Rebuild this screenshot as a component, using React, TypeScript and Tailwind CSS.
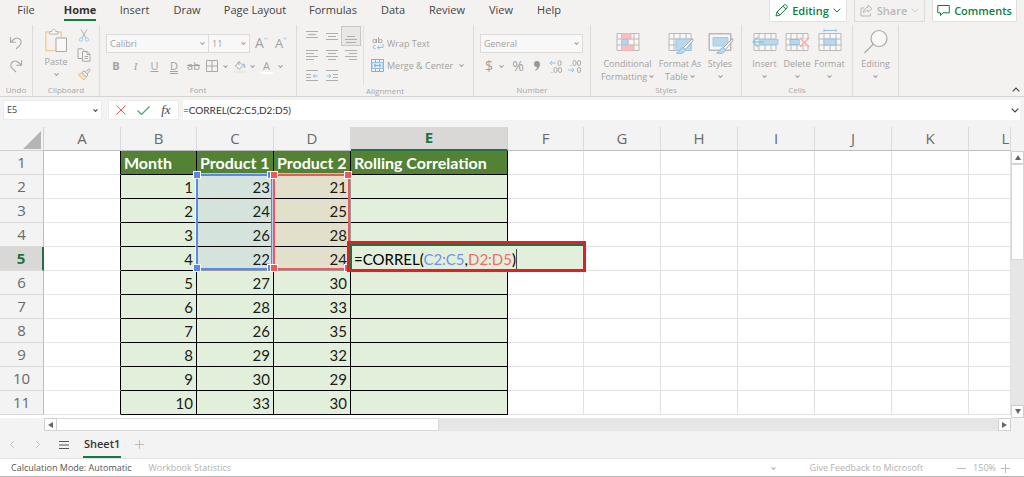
import React from "react";

const ui = "font-['Open_Sans','Noto_Sans',sans-serif]";
const gridFont = "font-['Lato','Open_Sans',sans-serif]";

function Chevron({ className = "w-[5px] h-[3px]", width = 1.8 }: { className?: string; width?: number }) {
  return (
    <svg viewBox="0 0 8 5" className={className} fill="none" stroke="currentColor" strokeWidth={width} aria-hidden="true">
      <path d="M0.7 0.7 4 4 7.3 0.7" />
    </svg>
  );
}

function Group({ label, className, children }: { label: string; className: string; children: React.ReactNode }) {
  return (
    <section aria-label={label || "Editing"} className={`flex h-[71px] shrink-0 flex-col border-r border-[#dddbd9] ${className}`}>
      <div className="flex h-[60px]">{children}</div>
      <div className="text-center text-[8px] leading-[12px] text-[#a9a7a5]">{label}</div>
    </section>
  );
}

function UndoIcon({ flip = false }: { flip?: boolean }) {
  return (
    <svg viewBox="0 0 14 14" className="h-[14px] w-[14px]" fill="none" stroke="#aaa8a6" strokeWidth="1.1" aria-hidden="true">
      <g transform={flip ? "translate(14 0) scale(-1 1)" : undefined}>
        <path d="M1.5 1.2v5h5.2M1.7 6 5.6 2.8C8.2.9 12 2.7 12.2 6c0 1.5-.5 2.3-1.5 3.3L7 13" />
      </g>
    </svg>
  );
}

function PasteIcon() {
  return (
    <svg viewBox="0 0 24 26" className="h-[26px] w-[24px]" fill="none" aria-hidden="true">
      <path d="M7 4H1.8v18.5H12M13 4h4.200v5" stroke="#f6cd97" strokeWidth="1.5" />
      <path d="M5.500 6V3.500h2.300C8 .6 11.500.6 11.700 3.500H14V6z" fill="#f8f8f8" stroke="#b8b6b4" />
      <path d="M12 10h10.500v13.500H12z" fill="#f8f8f8" stroke="#aaa8a6" />
    </svg>
  );
}

function CutIcon() {
  return (
    <svg viewBox="0 0 12 13" className="h-[13px] w-[12px]" fill="none" aria-hidden="true">
      <path d="M3 .5 8 9M9 .5 4 9" stroke="#b3b1af" />
      <circle cx="3" cy="10.5" r="1.7" stroke="#a3cde9" />
      <circle cx="9" cy="10.5" r="1.7" stroke="#a3cde9" />
    </svg>
  );
}

function CopyIcon() {
  return (
    <svg viewBox="0 0 14 14" className="h-[14px] w-[14px]" fill="none" stroke="#aaa8a6" aria-hidden="true">
      <path d="M5 10.500H1V.8h4.500L7.500 3" />
      <path d="M5.500 3.500h4.700L13 6.300v6.900H5.500zM10 3.500v3h3M7.500 8.500H11M7.500 10.500H11" fill="#f5f5f5" />
    </svg>
  );
}

function PainterIcon() {
  return (
    <svg viewBox="0 0 14 13" className="h-[13px] w-[14px]" fill="none" aria-hidden="true">
      <path d="M1 6.500 5.500 5l4 4L7 12z" fill="#fae1c0" stroke="#f3be84" />
      <path d="m5 4.500 2-1.700 4 4.200-1.800 2zM8.300 4 12 .8l1.200 1.300L10 5.800" fill="#f5f5f5" stroke="#aaa8a6" />
    </svg>
  );
}

function Bars({ kind }: { kind: string }) {
  const sets: Record<string, number[][]> = {
    top: [[2, 0, 12], [5, 2, 10], [8, 0, 12]],
    middle: [[4, 0, 12], [7, 2, 10], [10, 0, 12]],
    bottom: [[7, 2, 10], [10, 0, 12], [13, 1, 11]],
    left: [[1, 0, 12], [4, 0, 8], [7, 0, 12], [10, 0, 8]],
    center: [[1, 0, 12], [4, 2, 10], [7, 0, 12], [10, 2, 10]],
    right: [[1, 0, 12], [4, 4, 12], [7, 0, 12], [10, 4, 12]],
    outdent: [[1, 0, 12], [5, 0, 5], [8, 0, 5], [11, 0, 12]],
    indent: [[1, 0, 12], [5, 7, 12], [8, 7, 12], [11, 0, 12]],
  };
  return (
    <svg viewBox="0 0 12 14" className="h-[14px] w-[12px]" aria-hidden="true">
      {sets[kind].map(([y, a, b]) => (
        <path key={y} d={`M${a} ${y + 0.5}H${b}`} stroke="#b0aeac" />
      ))}
      {kind === "outdent" && <path d="M12 7H7.500M9.200 5 7.300 7l1.900 2" stroke="#8fc3e6" fill="none" />}
      {kind === "indent" && <path d="M.5 7H5M3 5l2 2-2 2" stroke="#8fc3e6" fill="none" />}
    </svg>
  );
}

function MiniTable({ kind }: { kind: string }) {
  return (
    <svg viewBox="0 0 28 28" className="h-[28px] w-[28px]" fill="none" aria-hidden="true">
      <path d="M3 5.500h22v17H3zM3 11h22M3 17h22M8 5.500v17M14 5.500v17M20 5.500v17" fill="#f7f7f7" stroke="#bbb9b7" />
      {kind === "conditional" && (
        <>
          <path d="M7.500 5.500H17V11H7.500zM7.500 17H19v5.500H7.500z" fill="#f7bfbf" stroke="#f5b3b3" />
          <path d="M7.500 11.500H14v5H7.500z" fill="#b4d5ee" stroke="#a5c9e3" />
        </>
      )}
      {kind === "table" && <path d="M10 11h15v11.500H10z" fill="#b9d8ef" stroke="#9bc4e1" />}
      {kind === "styles" && <path d="M3.500 6h21v16h-21z" fill="#f7f7f7" stroke="#bbb9b7" />}
      {kind === "styles" && <path d="M7 9.500h15V18H7z" fill="#b9d8ef" stroke="#a3cae5" />}
      {(kind === "table" || kind === "styles") && (
        <>
          <path d="m26.500 10.500-9 9 2 2 7.500-9z" fill="#f8f8f8" stroke="#aaa8a6" />
          <path d="M17 19.500c-3 0-2.500 4.500-6.500 5.500 4 1.500 8.500 0 9-3.500z" fill="#b9d8ef" stroke="#91bddb" />
        </>
      )}
      {kind === "insert" && (
        <>
          <path d="M9 11.500h18v5H9z" fill="#b9d8ef" stroke="#a3cae5" />
          <path d="M13 14H2.500M7 9l-5 5 5 5" stroke="#8fc3e6" strokeWidth="1.3" />
        </>
      )}
      {kind === "delete" && (
        <>
          <path d="M7 11.500h9l2 2.500-2 2.500H7z" fill="#b9d8ef" stroke="#99bedb" />
          <path d="M17 11h9v6h-9z" fill="#f3f2f1" />
          <path d="m17 10 9 9m0-9-9 9" stroke="#f1a7a7" strokeWidth="1.3" />
        </>
      )}
      {kind === "format" && (
        <>
          <path d="M8 11h12v6H8z" fill="#b9d8ef" stroke="#99bedb" />
          <path d="M8 2.500h12M8 .8v3.400M20 .8v3.400" stroke="#8fc3e6" />
        </>
      )}
    </svg>
  );
}

function BigButton({ icon, lines, className }: { icon: string; lines: string[]; className: string }) {
  const two = lines.length > 1;
  return (
    <button className={`flex shrink-0 flex-col items-center text-[9px] leading-[13px] text-[#a3a19f] ${className}`}>
      <span className="mt-[2px] mb-[1px] flex h-[29px] items-center">
        {icon === "search" ? (
          <svg viewBox="0 0 28 28" className="h-[28px] w-[28px]" fill="none" stroke="#aaa8a6" strokeWidth="1.2" aria-hidden="true">
            <circle cx="17" cy="10.5" r="8" fill="#f7f7f7" />
            <path d="M11.300 16.200 2.500 25" />
          </svg>
        ) : (
          <MiniTable kind={icon} />
        )}
      </span>
      <span className="whitespace-nowrap">{lines[0]}</span>
      <span className="flex h-[13px] items-center gap-[2px] whitespace-nowrap">
        {two && lines[1]}
        <Chevron />
      </span>
    </button>
  );
}

const fontButton = "flex h-[16px] items-center justify-center text-[11px] leading-[16px]";

function Ribbon() {
  return (
    <div className="flex h-[73px] overflow-hidden border-b border-[#d6d4d2] pt-[1px] shadow-[0_1px_2px_#d8d8d8]">
      <Group label="Undo" className="w-[33px]">
        <div className="flex w-full flex-col items-center gap-[9px] pt-[11px]">
          <button aria-label="Undo"><UndoIcon /></button>
          <button aria-label="Redo"><UndoIcon flip /></button>
        </div>
      </Group>
      <Group label="Clipboard" className="w-[67px]">
        <button className="ml-[2px] flex w-[42px] flex-col items-center pt-[3px] text-[9px] leading-[15px] text-[#a3a19f]">
          <PasteIcon />
          Paste
          <Chevron className="mt-[4px] h-[3px] w-[5px]" />
        </button>
        <div className="flex w-[14px] flex-col items-center gap-[6px] pt-[4px]">
          <button aria-label="Cut"><CutIcon /></button>
          <button aria-label="Copy"><CopyIcon /></button>
          <button aria-label="Format painter"><PainterIcon /></button>
        </div>
      </Group>
      <Group label="Font" className="w-[197px]">
        <div className="flex w-full flex-col gap-[5px] pt-[9px] pl-[6px] text-[#a3a19f]">
          <div className="flex h-[19px]">
            <button aria-label="Font family" className="flex w-[103px] items-center justify-between border border-[#dddbd9] bg-[#f8f8f8] px-[3px] text-[9px]">
              Calibri <Chevron />
            </button>
            <button aria-label="Font size" className="flex w-[41px] items-center justify-between border border-l-0 border-[#dddbd9] bg-[#f8f8f8] px-[3px] text-[9px]">
              11 <Chevron />
            </button>
            <button aria-label="Grow font" className="ml-[5px] flex w-[14px] text-[14px] leading-[18px]">
              A<Chevron className="mt-[3px] h-[3px] w-[4px] shrink-0 rotate-180 text-[#8fc3e6]" />
            </button>
            <button aria-label="Shrink font" className="ml-[6px] flex w-[14px] text-[13px] leading-[19px]">
              A<Chevron className="mt-[3px] h-[3px] w-[4px] shrink-0 text-[#8fc3e6]" />
            </button>
          </div>
          <div className="flex items-center">
            <button className={`${fontButton} w-[20px] font-bold`}>B</button>
            <button className={`${fontButton} w-[19px] font-['Liberation_Serif',serif] italic`}>I</button>
            <button className={`${fontButton} w-[19px] underline`}>U</button>
            <button className={`${fontButton} w-[20px] underline decoration-double`}>D</button>
            <button className={`${fontButton} w-[19px] line-through`}>ab</button>
            <button aria-label="Borders" className={`${fontButton} w-[28px] gap-[5px]`}>
              <svg viewBox="0 0 12 12" className="h-[12px] w-[12px]" fill="none" stroke="#aaa8a6" aria-hidden="true">
                <path d="M.5.5h11v11H.5zM6 .5v11M.5 6h11" />
              </svg>
              <Chevron />
            </button>
            <button aria-label="Fill colour" className={`${fontButton} w-[27px] gap-[4px]`}>
              <svg viewBox="0 0 12 13" className="h-[13px] w-[12px]" fill="none" aria-hidden="true">
                <path d="M5 1.500 9 5.500 5 9.500 1.500 6zM5 1.500V5" stroke="#aaa8a6" />
                <path d="M9 4c1.800.3 1.800 2 1.500 4" stroke="#8fc3e6" strokeWidth="1.5" />
                <path d="M0 12h12" stroke="#e4ecdf" strokeWidth="2" />
              </svg>
              <Chevron />
            </button>
            <button aria-label="Font colour" className={`${fontButton} w-[27px] gap-[5px]`}>
              <span className="w-[12px] border-b-2 border-white leading-[13px]">A</span>
              <Chevron />
            </button>
          </div>
        </div>
      </Group>
      <Group label="Alignment" className="w-[177px]">
        <div className="grid w-[67px] grid-cols-[20px_19px_20px] grid-rows-[20px_20px_19px] justify-end border-r border-[#e1dfdd] pt-[1px] pr-[2px]">
          {["top", "middle", "bottom", "left", "center", "right", "outdent", "indent"].map((k) => (
            <button key={k} aria-label={k} className={`flex items-center justify-center ${k === "bottom" ? "border border-[#c8c6c4] bg-[#e9e7e6]" : ""}`}>
              <Bars kind={k} />
            </button>
          ))}
        </div>
        <div className="flex flex-col items-start gap-[7px] pt-[11px] pl-[7px] text-[9px] leading-[15px] text-[#a3a19f]">
          <button className="flex items-center gap-[3px] whitespace-nowrap">
            <svg viewBox="0 0 13 13" className="h-[13px] w-[13px]" fill="none" aria-hidden="true">
              <circle cx="3.5" cy="4" r="1.7" stroke="#aaa8a6" />
              <path d="M5.500 2v4M7.500 0v6M4.500 8.500c-3-1-3 4 0 3" stroke="#aaa8a6" />
              <circle cx="9.5" cy="4" r="1.7" stroke="#aaa8a6" />
              <path d="M12 7v3.500H6.500M8.500 8.500l-2 2 2 2" stroke="#8fc3e6" />
            </svg>
            Wrap Text
          </button>
          <button className="flex items-center gap-[3px] whitespace-nowrap">
            <svg viewBox="0 0 13 13" className="h-[13px] w-[13px]" fill="none" aria-hidden="true">
              <path d="M.5.5h12v12H.5zM4.500.5v12M8.500.5v12" stroke="#aaa8a6" />
              <path d="M1 3.500h11v6H1z" fill="#dcebf6" stroke="#8fc3e6" />
              <path d="M3 6.500h7M5 4.800 3 6.500l2 1.700M8 4.800l2 1.700-2 1.700" stroke="#7db6dc" />
            </svg>
            Merge &amp; Center
            <Chevron className="ml-[3px] h-[3px] w-[5px]" />
          </button>
        </div>
      </Group>
      <Group label="Number" className="w-[117px]">
        <div className="flex w-full flex-col gap-[5px] pt-[9px] pl-[6px] text-[#a3a19f]">
          <button aria-label="Number format" className="flex h-[19px] w-[103px] items-center justify-between border border-[#dddbd9] bg-[#f8f8f8] px-[3px] text-[9px]">
            General <Chevron />
          </button>
          <div className="flex h-[16px] items-center pl-[5px] leading-[16px]">
            <button aria-label="Currency" className="flex w-[24px] items-center gap-[6px] text-[14px]">$<Chevron /></button>
            <button className="w-[18px] text-center text-[14px]">%</button>
            <button aria-label="Comma style" className="flex w-[19px] justify-center">
              <svg viewBox="0 0 6 10" className="h-[10px] w-[6px]" fill="#9a9896" aria-hidden="true">
                <path d="M3 0c3 0 3.500 3 2.500 5.500S2.500 9.500.5 10c1.500-1.500 2.500-2.500 2.500-4A2.800 2.800 0 0 1 3 0" />
              </svg>
            </button>
            {["dec", "inc"].map((k) => (
              <button key={k} aria-label={k === "dec" ? "Increase decimal" : "Decrease decimal"} className="flex w-[19px] justify-center">
                <svg viewBox="0 0 13 13" className="h-[13px] w-[13px]" fill="none" stroke="#b0aeac" aria-hidden="true">
                  {k === "dec" ? (
                    <>
                      <path d="M6.500 3H.8M3 1 1 3l2 2" stroke="#8fc3e6" />
                      <rect x="9" y=".5" width="3" height="5" rx="1.5" />
                      <path d="M3 12v1" />
                      <rect x="5" y="7.5" width="3" height="5" rx="1.5" />
                      <rect x="9.5" y="7.5" width="3" height="5" rx="1.5" />
                    </>
                  ) : (
                    <>
                      <rect x="5" y=".5" width="3" height="5" rx="1.5" />
                      <rect x="9.5" y=".5" width="3" height="5" rx="1.5" />
                      <path d="M3 5v1" />
                      <path d="M0 10h6M4 8l2 2-2 2" stroke="#8fc3e6" />
                      <rect x="9.5" y="7.5" width="3" height="5" rx="1.5" />
                    </>
                  )}
                </svg>
              </button>
            ))}
          </div>
        </div>
      </Group>
      <Group label="Styles" className="w-[151px]">
        <BigButton icon="conditional" lines={["Conditional", "Formatting"]} className="ml-[8px] w-[57px]" />
        <BigButton icon="table" lines={["Format As", "Table"]} className="w-[48px]" />
        <BigButton icon="styles" lines={["Styles"]} className="w-[32px]" />
      </Group>
      <Group label="Cells" className="w-[111px]">
        <BigButton icon="insert" lines={["Insert"]} className="ml-[6px] w-[33px]" />
        <BigButton icon="delete" lines={["Delete"]} className="w-[32px]" />
        <BigButton icon="format" lines={["Format"]} className="w-[33px]" />
      </Group>
      <Group label="" className="w-[46px]">
        <BigButton icon="search" lines={["Editing"]} className="w-full" />
      </Group>
      <button aria-label="Collapse ribbon" className="mt-auto mr-[4px] mb-[4px] ml-auto text-[#444]">
        <Chevron className="h-[5px] w-[8px] rotate-180" width={1.2} />
      </button>
    </div>
  );
}

const tabs: [string, string][] = [
  ["File", "w-[52px]"], ["Home", "w-[56px]"], ["Insert", "w-[53px]"], ["Draw", "w-[52px]"], ["Page Layout", "w-[84px]"],
  ["Formulas", "w-[72px]"], ["Data", "w-[48px]"], ["Review", "w-[60px]"], ["View", "w-[48px]"], ["Help", "w-[48px]"],
];

const columns = ["A", "B", "C", "D", "E", "F", "G", "H", "I", "J", "K", "L"];
const colWidths = [
  "w-[77px]", "w-[76px]", "w-[77px]", "w-[77px]", "w-[157px]", "w-[76px]",
  "w-[77px]", "w-[77px]", "w-[77px]", "w-[77px]", "w-[77px]", "",
];
const data = [
  ["Month", "Product 1", "Product 2", "Rolling Correlation"],
  ["1", "23", "21", ""], ["2", "24", "25", ""], ["3", "26", "28", ""], ["4", "22", "24", ""], ["5", "27", "30", ""],
  ["6", "28", "33", ""], ["7", "26", "35", ""], ["8", "29", "32", ""], ["9", "30", "29", ""], ["10", "33", "30", ""],
];

function Handles({ tone }: { tone: string }) {
  return (
    <>
      {["-top-[5px] -left-[5px]", "-top-[5px] -right-[4px]", "-bottom-[4px] -left-[5px]", "-bottom-[4px] -right-[4px]"].map((p) => (
        <span key={p} className={`absolute h-[8px] w-[8px] border border-white ${tone} ${p}`} />
      ))}
    </>
  );
}

function CellContent({ row, col }: { row: number; col: number }) {
  if (row === 1 && col === 2)
    return (
      <span className="pointer-events-none absolute -top-[1px] -left-[1px] z-10 h-[96px] w-[77px] border-2 border-[#5b87ea] outline outline-white/60">
        <Handles tone="bg-[#5b87ea]" />
      </span>
    );
  if (row === 1 && col === 3)
    return (
      <span className="pointer-events-none absolute -top-[1px] -left-[1px] z-20 h-[96px] w-[77px] border-2 border-[#eb5a5a] outline outline-white/60">
        <Handles tone="bg-[#eb5a5a]" />
      </span>
    );
  if (row === 4 && col === 4)
    return (
      <div className="absolute -top-[6px] -left-[4px] z-30 flex h-[31px] w-[239px] border-[3px] border-[#e91c24] bg-[#e2efda] text-left">
        <div
          role="textbox"
          aria-label="Cell E5"
          contentEditable
          suppressContentEditableWarning
          className="flex-1 border-t-2 border-l-2 border-[#1f7244] pl-[2px] text-[15px] leading-[26px] whitespace-nowrap text-black outline-none"
        >
          =CORREL(<span className="text-[#6f93ee]">C2:C5</span>,<span className="text-[#e9706c]">D2:D5</span>
          <span className="border-r border-[#444] py-[1px]">)</span>
        </div>
      </div>
    );
  return null;
}

function cellClass(row: number, col: number) {
  if (col < 1 || col > 4) {
    return col === 0
      ? "text-[15px] border-r border-b border-r-black border-b-[#e6e6e6] bg-white"
      : "text-[15px] border-r border-b border-[#e1e1e1] bg-white";
  }
  if (row === 0) return "text-[16px] border-r border-b border-black bg-[#548235] pl-[3px] text-left font-bold text-white";
  const align = "text-[15px] border-r border-b border-black text-right pr-[3px] text-[#1c1c1c]";
  const tint =
    row <= 4 && col === 2 ? "bg-[#d4e4dc]" : row <= 4 && col === 3 ? "bg-[#e2dfca]" : "bg-[#e2efda]";
  return `${align} ${tint}`;
}

const arrow = "flex items-center justify-center border border-[#d0d0d0] bg-white";

export default function App() {
  return (
    <div className={`flex min-w-[1024px] flex-col overflow-hidden bg-[#f3f2f1] text-[#444] ${ui}`}>
      <header className="flex h-[24px] items-start">
        <nav className="flex">
          {tabs.map(([name, w]) => (
            <button key={name} className={`flex h-[21px] justify-center text-[11px] leading-[19px] whitespace-nowrap ${w}`}>
              <span className={name === "Home" ? "h-[21px] border-b-2 border-[#107c41] font-bold text-[#333]" : ""}>{name}</span>
            </button>
          ))}
        </nav>
        <div className="ml-auto flex gap-[7px] pr-[7px] text-[11px] leading-[22px] font-semibold">
          <button className="flex h-[22px] w-[78px] items-center justify-center gap-[4px] rounded-b-[2px] border border-t-0 border-[#e0e0e0] bg-white text-[#107c41]">
            <svg viewBox="0 0 13 13" className="h-[13px] w-[13px]" fill="none" stroke="currentColor" aria-hidden="true">
              <path d="m1 12 1-4L9.200.9q1-.6 2 .2l.7.7q.8 1 .1 2L5 11zM8 2.200 10.800 5M2 8l3 3" />
            </svg>
            Editing
            <Chevron className="h-[5px] w-[8px]" width={1} />
          </button>
          <button className="flex h-[22px] w-[71px] items-center justify-center gap-[4px] border border-t-0 border-[#dddbd9] text-[#b9b7b5]">
            <svg viewBox="0 0 13 13" className="h-[13px] w-[13px]" fill="none" stroke="currentColor" aria-hidden="true">
              <path d="M4 4H1v8h9.500V9.500M8 1l4 3.700-4 3.600V6.500C5.500 6.300 4.500 7.500 3.500 9c0-3 1.500-5.300 4.500-5.700z" />
            </svg>
            Share
            <Chevron className="h-[5px] w-[8px] text-[#cfcdcb]" width={1} />
          </button>
          <button className="flex h-[22px] w-[85px] items-center justify-center gap-[4px] rounded-b-[2px] border border-t-0 border-[#e0e0e0] bg-white text-[#107c41]">
            <svg viewBox="0 0 13 13" className="h-[13px] w-[13px]" fill="none" stroke="currentColor" aria-hidden="true">
              <path d="M.8 1.500h11.500v7.300H6L3.500 11.500V8.800H.8z" />
            </svg>
            Comments
          </button>
        </div>
      </header>

      <Ribbon />

      <div className="flex h-[30px] items-start bg-[#f3f3f3] pt-[3px] pr-[4px] pl-[3px] text-[9px]">
        <button aria-label="Name box" className="flex h-[20px] w-[99px] items-center justify-between border border-[#ececec] bg-white px-[3px]">
          E5 <Chevron className="h-[3px] w-[5px]" />
        </button>
        <div className="ml-[6px] flex h-[20px] w-[71px] items-center justify-around border border-[#ececec] bg-white px-[2px]">
          <button aria-label="Cancel">
            <svg viewBox="0 0 10 10" className="h-[10px] w-[10px]" stroke="#ee5c5c" aria-hidden="true"><path d="m.5.5 9 9m0-9-9 9" /></svg>
          </button>
          <button aria-label="Enter">
            <svg viewBox="0 0 13 9" className="h-[9px] w-[13px]" fill="none" stroke="#3fa868" strokeWidth="1.2" aria-hidden="true"><path d="m.5 4.500 4 4 8-8" /></svg>
          </button>
          <button className="font-['Liberation_Serif',serif] text-[13px] leading-[16px] italic">fx</button>
        </div>
        <div className="ml-[4px] flex h-[20px] flex-1 items-center bg-white pr-[1px]">
          <input
            aria-label="Formula"
            defaultValue="=CORREL(C2:C5,D2:D5)"
            className={`h-[18px] min-w-0 flex-1 bg-transparent text-[10px] text-[#333] outline-none ${gridFont}`}
          />
          <button aria-label="Expand formula bar"><Chevron className="h-[5px] w-[8px]" width={1.2} /></button>
        </div>
      </div>

      <main className="flex h-[291px] bg-[#f3f3f3]">
        <div className="min-w-0 flex-1 overflow-hidden bg-white">
          <table className="w-full table-fixed border-separate border-spacing-0">
            <colgroup>
              <col className="w-[44px]" />
              {columns.map((c, i) => <col key={c} className={colWidths[i]} />)}
            </colgroup>
            <thead>
              <tr className="h-[24px]">
                <th aria-label="Select all" className="border-r border-b border-[#cfcfcf] bg-[#f3f3f3] p-0">
                  <svg viewBox="0 0 18 18" className="mt-[2px] ml-[23px] h-[18px] w-[18px]" aria-hidden="true"><path d="M18 0v18H0z" fill="#b5b5b5" /></svg>
                </th>
                {columns.map((c) => (
                  <th
                    key={c}
                    scope="col"
                    className={`overflow-hidden p-0 pb-[2px] text-center text-[15px] leading-[20px] ${
                      c === "E"
                        ? "border-r border-b-2 border-r-[#cfcfcf] border-b-[#1f7244] bg-[#d9d8d7] font-bold text-[#1f7244]"
                        : "border-r border-b border-r-[#dadada] border-b-[#bdbdbd] bg-[#f3f3f3] font-normal text-[#6a6a6a]"
                    } ${c === "L" ? "pl-[32px]" : ""}`}
                  >
                    {c}
                  </th>
                ))}
              </tr>
            </thead>
            <tbody>
              {data.map((cells, r) => (
                <tr key={r} className="h-[24px]">
                  <th
                    scope="row"
                    className={`p-0 text-center text-[15px] leading-[23px] ${
                      r === 4
                        ? "border-r-2 border-b border-r-[#1f7244] border-b-[#dadada] bg-[#d9d8d7] font-bold text-[#1f7244]"
                        : "border-r border-b border-r-[#bdbdbd] border-b-[#dadada] bg-[#f3f3f3] font-normal text-[#6a6a6a]"
                    }`}
                  >
                    {r + 1}
                  </th>
                  {columns.map((c, i) => (
                    <td key={c} className={`relative p-0 pt-[1px] leading-[22px] whitespace-nowrap ${gridFont} ${cellClass(r, i)}`}>
                      {i >= 1 && i <= 4 ? cells[i - 1] : ""}
                      <CellContent row={r} col={i} />
                    </td>
                  ))}
                </tr>
              ))}
            </tbody>
          </table>
        </div>
        <div className="mt-[24px] flex w-[13px] flex-col bg-[#e6e6e6]">
          <button aria-label="Scroll up" className={`h-[13px] ${arrow}`}>
            <svg viewBox="0 0 6 5" className="h-[5px] w-[6px]" fill="#666" aria-hidden="true"><path d="M3 0 6 5H0z" /></svg>
          </button>
          <div className="h-[96px] border border-[#d8d8d8] bg-white" />
          <button aria-label="Scroll down" className={`mt-auto h-[13px] ${arrow}`}>
            <svg viewBox="0 0 6 5" className="h-[5px] w-[6px]" fill="#666" aria-hidden="true"><path d="M0 0h6L3 5z" /></svg>
          </button>
        </div>
      </main>

      <div className="flex h-[13px] bg-[#f3f3f3] pr-[13px] pl-[44px]">
        <div className="flex flex-1 bg-[#e6e6e6]">
          <button aria-label="Scroll left" className={`w-[13px] ${arrow}`}>
            <svg viewBox="0 0 5 6" className="h-[6px] w-[5px]" fill="#666" aria-hidden="true"><path d="M0 3 5 0v6z" /></svg>
          </button>
          <div className="w-[382px] border-y border-r border-[#d8d8d8] bg-white" />
          <button aria-label="Scroll right" className={`ml-auto w-[13px] ${arrow}`}>
            <svg viewBox="0 0 5 6" className="h-[6px] w-[5px]" fill="#666" aria-hidden="true"><path d="M5 3 0 0v6z" /></svg>
          </button>
        </div>
      </div>

      <div className="flex h-[28px] items-center border-b border-[#e1e1e1] bg-[#f3f3f3] pl-[8px]">
        <button aria-label="Previous sheet" className="text-[#bdbdbd]">
          <Chevron className="h-[5px] w-[8px] rotate-90" width={1} />
        </button>
        <button aria-label="Next sheet" className="ml-[18px] text-[#bdbdbd]">
          <Chevron className="h-[5px] w-[8px] -rotate-90" width={1} />
        </button>
        <button aria-label="All sheets" className="ml-[17px]">
          <svg viewBox="0 0 10 8" className="h-[8px] w-[10px]" stroke="#555" aria-hidden="true"><path d="M0 .5h10M0 4h10M0 7.500h10" /></svg>
        </button>
        <button className="ml-[14px] h-[27px] border-b-2 border-[#107c41] px-[1px] pt-[2px] text-[11px] font-semibold text-[#333]">Sheet1</button>
        <button aria-label="Add sheet" className="ml-[14px]">
          <svg viewBox="0 0 9 9" className="h-[9px] w-[9px]" stroke="#bdbdbd" aria-hidden="true"><path d="M4.500 0v9M0 4.500h9" /></svg>
        </button>
      </div>

      <footer className="flex h-[18px] items-center border-b border-[#b5b5b5] bg-white pt-[1px] pr-[14px] pl-[11px] text-[9px] text-[#b3b1af]">
        <span className="text-[#555]">Calculation Mode: Automatic</span>
        <button className="ml-[17px]">Workbook Statistics</button>
        <Chevron className="ml-auto h-[3px] w-[5px]" />
        <button className="ml-[34px]">Give Feedback to Microsoft</button>
        <button aria-label="Zoom out" className="ml-[34px] h-[1px] w-[9px] bg-[#bdbdbd]" />
        <span className="ml-[7px]">150%</span>
        <button aria-label="Zoom in" className="ml-[5px]">
          <svg viewBox="0 0 9 9" className="h-[9px] w-[9px]" stroke="#bdbdbd" aria-hidden="true"><path d="M4.500 0v9M0 4.500h9" /></svg>
        </button>
      </footer>
    </div>
  );
}
